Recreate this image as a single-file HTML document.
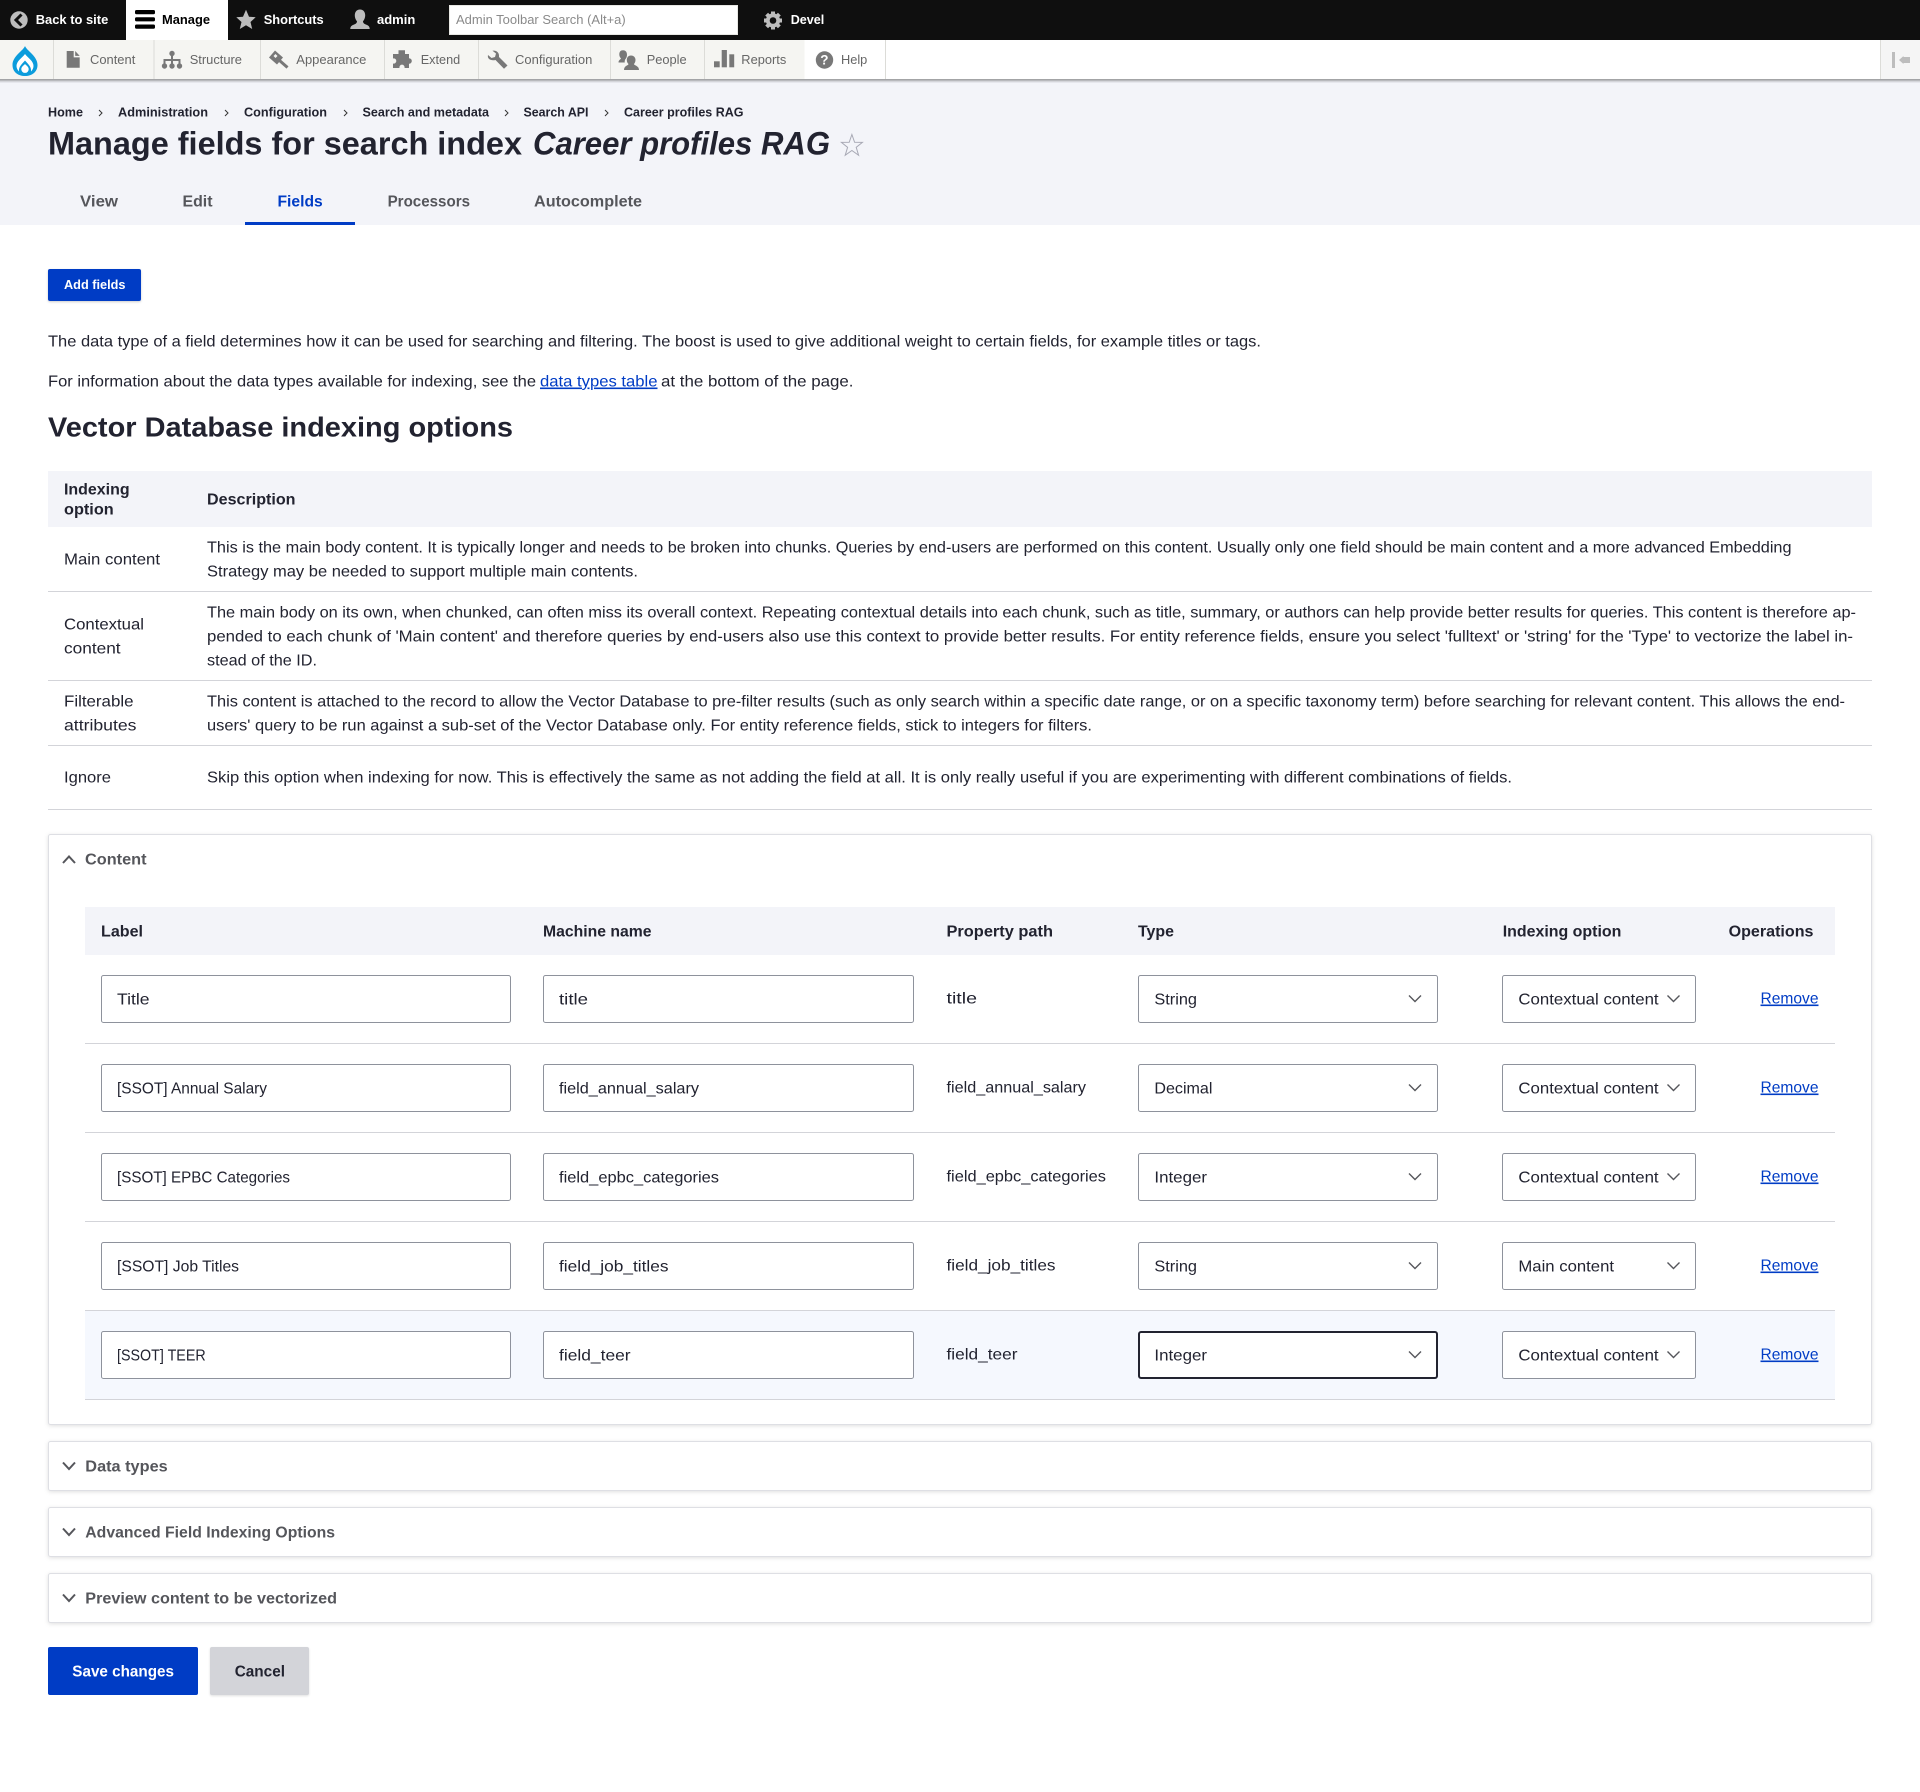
<!DOCTYPE html>
<html lang="en">
<head>
<meta charset="utf-8">
<title>Manage fields for search index Career profiles RAG</title>
<style>
html,body{margin:0;padding:0;background:#fff}
svg{display:block}
text{font-family:"Liberation Sans",Arial,sans-serif;font-size:16px;fill:#222330;white-space:pre;transform:translateY(-.5px)}
.tb{font-size:13px;font-weight:700;fill:#fff}
.mn{font-size:13px;fill:#666}
.bc{font-size:13px;font-weight:700;fill:#222330}
.b{font-weight:700}
.tab{font-weight:700;fill:#55565b}
.sm{font-weight:700;fill:#55565b}
.lk{fill:#003cc5;text-decoration:underline}
.inp{fill:#fff;stroke:#8e929c;stroke-width:1}
.ch{fill:none;stroke:#55565b;stroke-width:1.4}
.ch2{fill:none;stroke:#55565b;stroke-width:2}
.ln{fill:#d3d4d9}
.box{fill:#fff;stroke:#dedfe4;stroke-width:1;filter:drop-shadow(0 1px 2px rgba(0,0,0,.12))}
</style>
</head>
<body>
<svg xmlns="http://www.w3.org/2000/svg" width="1920" height="1792" viewBox="0 0 1920 1792">
<rect width="1920" height="1792" fill="#fff"/>

<!-- top bar -->
<rect width="1920" height="40" fill="#0f0f0f"/>
<rect x="126" width="102" height="40" fill="#fff"/>
<circle cx="19" cy="20" r="8.7" fill="#bdbdbd"/>
<path d="M21.5 14.5 L16 20 L21.5 25.5" fill="none" stroke="#0f0f0f" stroke-width="3"/>
<text class="tb" x="35.7" y="24.5" textLength="72.6" lengthAdjust="spacingAndGlyphs">Back to site</text>
<rect x="135" y="10" width="20" height="4.2" rx="1.5" fill="#000"/>
<rect x="135" y="17.2" width="20" height="4.2" rx="1.5" fill="#000"/>
<rect x="135" y="24.5" width="20" height="4.2" rx="1.5" fill="#000"/>
<text class="tb" style="fill:#000" x="162" y="24.5" textLength="48" lengthAdjust="spacingAndGlyphs">Manage</text>
<path d="M246 9.7 L249 16.8 L255.7 17.2 L250.5 22 L252.2 29 L246 25.3 L239.8 29 L241.5 22 L236.3 17.2 L243 16.8 Z" fill="#bdbdbd"/>
<text class="tb" x="263.7" y="24.5" textLength="60" lengthAdjust="spacingAndGlyphs">Shortcuts</text>
<path d="M360 9.5 C363.5 9.5 365.2 12.3 365.2 15.3 C365.2 18 364 20.3 363 21.3 C363 23.3 364.5 24 366.5 24.8 C368.5 25.6 369.7 26.7 369.7 29 L350.3 29 C350.3 26.7 351.5 25.6 353.5 24.8 C355.5 24 357 23.3 357 21.3 C356 20.3 354.8 18 354.8 15.3 C354.8 12.3 356.5 9.5 360 9.5Z" fill="#bdbdbd"/>
<text class="tb" x="377" y="24.5" textLength="38.3" lengthAdjust="spacingAndGlyphs">admin</text>
<rect x="449.5" y="5.5" width="288" height="29" fill="#fff" stroke="#e8e8e4" stroke-width="1"/>
<text class="mn" style="fill:#8a8a8a" x="456" y="24.5" textLength="169.7" lengthAdjust="spacingAndGlyphs">Admin Toolbar Search (Alt+a)</text>
<g fill="#bdbdbd">
<circle cx="773" cy="20.5" r="5.3" fill="none" stroke="#bdbdbd" stroke-width="3.6"/>
<rect x="771" y="11.5" width="4" height="18"/>
<rect x="771" y="11.5" width="4" height="18" transform="rotate(45 773 20.5)"/>
<rect x="771" y="11.5" width="4" height="18" transform="rotate(90 773 20.5)"/>
<rect x="771" y="11.5" width="4" height="18" transform="rotate(135 773 20.5)"/>
</g>
<circle cx="773" cy="20.5" r="3.3" fill="#0f0f0f"/>
<text class="tb" x="790.7" y="24.5" textLength="33.6" lengthAdjust="spacingAndGlyphs">Devel</text>

<!-- page header bg -->
<rect y="79" width="1920" height="146" fill="#f3f4f9"/>

<!-- second bar -->
<rect y="40" width="1920" height="39" fill="#fff"/>
<rect y="40" width="804.5" height="39" fill="#f5f5f2"/>
<rect x="1880" y="40" width="40" height="39" fill="#f5f5f5"/>
<g fill="#dcdcd8">
<rect x="53" y="40" width="1" height="39"/><rect x="153.5" y="40" width="1" height="39"/><rect x="260" y="40" width="1" height="39"/><rect x="384" y="40" width="1" height="39"/><rect x="478" y="40" width="1" height="39"/><rect x="610" y="40" width="1" height="39"/><rect x="704" y="40" width="1" height="39"/><rect x="885" y="40" width="1" height="39"/><rect x="1880" y="40" width="1" height="39"/>
</g>
<rect y="79" width="1920" height="1" fill="#a3a4a6"/>
<rect y="80" width="1920" height="1" fill="#b8b9bd"/>
<rect y="81" width="1920" height="1" fill="#d4d5da"/>
<rect y="82" width="1920" height="1" fill="#e6e7ed"/>

<!-- drupal logo -->
<path d="M25 46 C27 51 37.5 56 37.5 65 C37.5 72 32 76 25 76 C18 76 12.5 72 12.5 65 C12.5 56 23 51 25 46Z" fill="#0b9cdc"/>
<path d="M25 54 C28 58 33.5 61 33.5 66 C33.5 68 32.5 70 31 71.5 C31.5 66.5 28 64 25 60.5 C22 64 18.5 66.5 19 71.5 C17.5 70 16.5 68 16.5 66 C16.5 61 22 58 25 54Z" fill="#fff"/>
<path d="M25 64 C26 65.3 28.7 66.7 28.7 69.2 A3.7 3.7 0 0 1 21.3 69.2 C21.3 66.7 24 65.3 25 64Z" fill="#fff"/>

<!-- menu icons -->
<g fill="#787878">
<path d="M66.7 51 H73.7 V57.4 H79.7 V67.7 H66.7Z"/><path d="M75.2 51 L79.7 55.9 H75.2Z"/>
<circle cx="172" cy="53.5" r="2.7"/><circle cx="164.5" cy="66" r="2.7"/><circle cx="172" cy="66" r="2.7"/><circle cx="179.5" cy="66" r="2.7"/>
<path d="M171 53 h2 v6 h7.5 v7 h-2 v-5 h-5.5 v5 h-2 v-5 h-5.5 v5 h-2 v-7 h7.5z"/>
<path d="M269 57.5 L275 50.5 L283 57.5 L277 64.5Z M273.5 56 L275.5 58 L277.5 56 L275.5 54Z" fill-rule="evenodd"/>
<path d="M279.5 60.5 L287.5 67.5" stroke="#787878" stroke-width="3" fill="none"/>
<path d="M393 54 H398.5 V50.3 H405 V54 H409 V58.2 A2.8 2.8 0 1 1 409 63.8 V68 H404.5 A2.6 2.6 0 1 0 399.5 68 H393 V63.5 A2.6 2.6 0 1 0 393 58.5Z"/>
<path d="M488 55 L491.5 58 L495 57 L496 53.5 L492.5 50.7 C497 50 499.5 53 499 57 L507.5 65.5 L504 68.7 L495.5 60 C491 61 487 59 488 55Z"/>
<path d="M623 50.3 C626 50.3 627 52.5 627 55 C627 57 626 58.5 625.3 59.3 C624.8 60.5 624.5 61.5 624.8 62.5 L618.5 62.5 C618.5 60 620.5 59.5 621 58.5 C620 57.5 619.3 56 619.3 54.5 C619.3 52 620.5 50.3 623 50.3Z"/>
<path d="M631 55.5 C634 55.5 635.5 57.7 635.5 60 C635.5 62 634.5 63.2 634 64 C634 65.5 639 65.5 639 70 L624 70 C624 65.5 628.5 65.5 628.5 64 C627.7 63.2 626.8 62 626.8 60 C626.8 57.7 628 55.5 631 55.5Z"/>
<rect x="714" y="61.3" width="5.7" height="6"/><rect x="721.7" y="50" width="5.2" height="17.3"/><rect x="729.3" y="54.3" width="4.9" height="13"/>
<circle cx="824.5" cy="60" r="8.7"/>
</g>
<text x="820.3" y="65" style="font-size:13.5px;font-weight:700;fill:#fff">?</text>
<rect x="1892" y="52" width="3" height="16" fill="#bdbdbd"/>
<path d="M1899 60 L1903.5 56 V57 H1910 V63 H1903.5 V64Z" fill="#bdbdbd"/>

<text class="mn" x="90" y="64.5" textLength="45.3" lengthAdjust="spacingAndGlyphs">Content</text>
<text class="mn" x="189.7" y="64.5" textLength="52.3" lengthAdjust="spacingAndGlyphs">Structure</text>
<text class="mn" x="296.3" y="64.5" textLength="70" lengthAdjust="spacingAndGlyphs">Appearance</text>
<text class="mn" x="420.7" y="64.5" textLength="39.5" lengthAdjust="spacingAndGlyphs">Extend</text>
<text class="mn" x="515" y="64.5" textLength="77.3" lengthAdjust="spacingAndGlyphs">Configuration</text>
<text class="mn" x="646.7" y="64.5" textLength="40" lengthAdjust="spacingAndGlyphs">People</text>
<text class="mn" x="741.3" y="64.5" textLength="45" lengthAdjust="spacingAndGlyphs">Reports</text>
<text class="mn" x="841" y="64.5" textLength="26.3" lengthAdjust="spacingAndGlyphs">Help</text>

<!-- breadcrumb -->
<text class="bc" x="48" y="117" textLength="35" lengthAdjust="spacingAndGlyphs">Home</text>
<text class="bc" x="118" y="117" textLength="90" lengthAdjust="spacingAndGlyphs">Administration</text>
<text class="bc" x="244" y="117" textLength="83" lengthAdjust="spacingAndGlyphs">Configuration</text>
<text class="bc" x="362.5" y="117" textLength="126.5" lengthAdjust="spacingAndGlyphs">Search and metadata</text>
<text class="bc" x="523.5" y="117" textLength="65" lengthAdjust="spacingAndGlyphs">Search API</text>
<text class="bc" x="624" y="117" textLength="119.5" lengthAdjust="spacingAndGlyphs">Career profiles RAG</text>
<g fill="none" stroke="#333" stroke-width="1">
<path d="M99 110 L102 113 L99 116"/><path d="M225 110 L228 113 L225 116"/><path d="M344 110 L347 113 L344 116"/><path d="M505 110 L508 113 L505 116"/><path d="M605 110 L608 113 L605 116"/>
</g>

<!-- title -->
<text x="48" y="155" class="b" style="font-size:32px" textLength="474" lengthAdjust="spacingAndGlyphs">Manage fields for search index</text>
<text x="533" y="155" class="b" style="font-size:32px;font-style:italic" textLength="297" lengthAdjust="spacingAndGlyphs">Career profiles RAG</text>
<path d="M851.9 134.5 L854.6 142.3 L862.4 142.4 L856.2 147.3 L858.6 155.3 L851.9 150.5 L845.2 155.3 L847.6 147.3 L841.4 142.4 L849.2 142.3 Z" fill="none" stroke="#a8a9b5" stroke-width="1"/>

<!-- tabs -->
<text class="tab" x="80" y="207" textLength="38" lengthAdjust="spacingAndGlyphs">View</text>
<text class="tab" x="182.5" y="207" textLength="30" lengthAdjust="spacingAndGlyphs">Edit</text>
<text class="tab" style="fill:#003cc5" x="277.5" y="207" textLength="45.2" lengthAdjust="spacingAndGlyphs">Fields</text>
<text class="tab" x="387.6" y="207" textLength="82.4" lengthAdjust="spacingAndGlyphs">Processors</text>
<text class="tab" x="534" y="207" textLength="108" lengthAdjust="spacingAndGlyphs">Autocomplete</text>
<rect x="245" y="222" width="110" height="3" fill="#003cc5"/>

<!-- add fields -->
<rect x="48" y="269" width="93" height="32" rx="2" fill="#003cc5" style="filter:drop-shadow(0 1px 1px rgba(0,0,0,.2))"/>
<text class="b" style="font-size:13px;fill:#fff" x="64" y="289.5" textLength="61.5" lengthAdjust="spacingAndGlyphs">Add fields</text>

<!-- intro -->
<text x="48" y="347" textLength="1213" lengthAdjust="spacingAndGlyphs">The data type of a field determines how it can be used for searching and filtering. The boost is used to give additional weight to certain fields, for example titles or tags.</text>
<text x="48" y="387" textLength="488" lengthAdjust="spacingAndGlyphs">For information about the data types available for indexing, see the</text>
<text class="lk" x="540" y="387" textLength="117.5" lengthAdjust="spacingAndGlyphs">data types table</text>
<text x="661" y="387" textLength="192.5" lengthAdjust="spacingAndGlyphs">at the bottom of the page.</text>

<text class="b" style="font-size:28px" x="48" y="437" textLength="465" lengthAdjust="spacingAndGlyphs">Vector Database indexing options</text>

<!-- indexing table -->
<rect x="48" y="471" width="1824" height="56" fill="#f3f4f9"/>
<text class="b" x="64" y="495" textLength="65.6" lengthAdjust="spacingAndGlyphs">Indexing</text>
<text class="b" x="64" y="515" textLength="49.7" lengthAdjust="spacingAndGlyphs">option</text>
<text class="b" x="207" y="505" textLength="88.5" lengthAdjust="spacingAndGlyphs">Description</text>

<text x="64" y="565" textLength="96" lengthAdjust="spacingAndGlyphs">Main content</text>
<text x="207" y="553" textLength="1584.5" lengthAdjust="spacingAndGlyphs">This is the main body content. It is typically longer and needs to be broken into chunks. Queries by end-users are performed on this content. Usually only one field should be main content and a more advanced Embedding</text>
<text x="207" y="577" textLength="431" lengthAdjust="spacingAndGlyphs">Strategy may be needed to support multiple main contents.</text>
<rect class="ln" x="48" y="591" width="1824" height="1"/>

<text x="64" y="630" textLength="80" lengthAdjust="spacingAndGlyphs">Contextual</text>
<text x="64" y="654" textLength="56.6" lengthAdjust="spacingAndGlyphs">content</text>
<text x="207" y="618" textLength="1649" lengthAdjust="spacingAndGlyphs">The main body on its own, when chunked, can often miss its overall context. Repeating contextual details into each chunk, such as title, summary, or authors can help provide better results for queries. This content is therefore ap-</text>
<text x="207" y="642" textLength="1646" lengthAdjust="spacingAndGlyphs">pended to each chunk of 'Main content' and therefore queries by end-users also use this context to provide better results. For entity reference fields, ensure you select 'fulltext' or 'string' for the 'Type' to vectorize the label in-</text>
<text x="207" y="666" textLength="110" lengthAdjust="spacingAndGlyphs">stead of the ID.</text>
<rect class="ln" x="48" y="680" width="1824" height="1"/>

<text x="64" y="707" textLength="69.5" lengthAdjust="spacingAndGlyphs">Filterable</text>
<text x="64" y="731" textLength="72.5" lengthAdjust="spacingAndGlyphs">attributes</text>
<text x="207" y="707" textLength="1638" lengthAdjust="spacingAndGlyphs">This content is attached to the record to allow the Vector Database to pre-filter results (such as only search within a specific date range, or on a specific taxonomy term) before searching for relevant content. This allows the end-</text>
<text x="207" y="731" textLength="885" lengthAdjust="spacingAndGlyphs">users' query to be run against a sub-set of the Vector Database only. For entity reference fields, stick to integers for filters.</text>
<rect class="ln" x="48" y="745" width="1824" height="1"/>

<text x="64" y="783" textLength="47" lengthAdjust="spacingAndGlyphs">Ignore</text>
<text x="207" y="783" textLength="1305" lengthAdjust="spacingAndGlyphs">Skip this option when indexing for now. This is effectively the same as not adding the field at all. It is only really useful if you are experimenting with different combinations of fields.</text>
<rect class="ln" x="48" y="809" width="1824" height="1"/>

<!-- content details -->
<rect class="box" x="48.5" y="834.5" width="1823" height="590" rx="2"/>
<path class="ch2" d="M63 863 L69 856.5 L75 863"/>
<text class="sm" x="85" y="865" textLength="61.5" lengthAdjust="spacingAndGlyphs">Content</text>

<rect x="85" y="907" width="1750" height="48" fill="#f3f4f9"/>
<text class="b" x="101" y="937" textLength="42" lengthAdjust="spacingAndGlyphs">Label</text>
<text class="b" x="543" y="937" textLength="108.5" lengthAdjust="spacingAndGlyphs">Machine name</text>
<text class="b" x="946.5" y="937" textLength="106.5" lengthAdjust="spacingAndGlyphs">Property path</text>
<text class="b" x="1138" y="937" textLength="36" lengthAdjust="spacingAndGlyphs">Type</text>
<text class="b" x="1502.7" y="937" textLength="118.7" lengthAdjust="spacingAndGlyphs">Indexing option</text>
<text class="b" x="1728.6" y="937" textLength="84.9" lengthAdjust="spacingAndGlyphs">Operations</text>

<rect x="85" y="1311" width="1750" height="88" fill="#f5f8fe"/>
<rect class="ln" x="85" y="1043" width="1750" height="1"/>
<rect class="ln" x="85" y="1132" width="1750" height="1"/>
<rect class="ln" x="85" y="1221" width="1750" height="1"/>
<rect class="ln" x="85" y="1310" width="1750" height="1"/>
<rect class="ln" x="85" y="1399" width="1750" height="1"/>

<!-- row 1 -->
<rect class="inp" x="101.5" y="975.5" width="409" height="47" rx="2"/>
<rect class="inp" x="543.5" y="975.5" width="370" height="47" rx="2"/>
<rect class="inp" x="1138.5" y="975.5" width="299" height="47" rx="2"/>
<rect class="inp" x="1502.5" y="975.5" width="193" height="47" rx="2"/>
<text x="117" y="1005" textLength="32.5" lengthAdjust="spacingAndGlyphs">Title</text>
<text x="559" y="1005" textLength="29" lengthAdjust="spacingAndGlyphs">title</text>
<text x="946.5" y="1004" textLength="30.5" lengthAdjust="spacingAndGlyphs">title</text>
<text x="1154.4" y="1005" textLength="42.6" lengthAdjust="spacingAndGlyphs">String</text>
<path class="ch" d="M1409 995.5 L1415 1001.5 L1421 995.5"/>
<text x="1518.4" y="1005" textLength="140.2" lengthAdjust="spacingAndGlyphs">Contextual content</text>
<path class="ch" d="M1667.5 995.5 L1673.5 1001.5 L1679.5 995.5"/>
<text class="lk" x="1760.5" y="1004" textLength="58" lengthAdjust="spacingAndGlyphs">Remove</text>

<!-- row 2 -->
<rect class="inp" x="101.5" y="1064.5" width="409" height="47" rx="2"/>
<rect class="inp" x="543.5" y="1064.5" width="370" height="47" rx="2"/>
<rect class="inp" x="1138.5" y="1064.5" width="299" height="47" rx="2"/>
<rect class="inp" x="1502.5" y="1064.5" width="193" height="47" rx="2"/>
<text x="117" y="1094" textLength="150" lengthAdjust="spacingAndGlyphs">[SSOT] Annual Salary</text>
<text x="559" y="1094" textLength="140" lengthAdjust="spacingAndGlyphs">field_annual_salary</text>
<text x="946.5" y="1093" textLength="139.5" lengthAdjust="spacingAndGlyphs">field_annual_salary</text>
<text x="1154.4" y="1094" textLength="58" lengthAdjust="spacingAndGlyphs">Decimal</text>
<path class="ch" d="M1409 1084.5 L1415 1090.5 L1421 1084.5"/>
<text x="1518.4" y="1094" textLength="140.2" lengthAdjust="spacingAndGlyphs">Contextual content</text>
<path class="ch" d="M1667.5 1084.5 L1673.5 1090.5 L1679.5 1084.5"/>
<text class="lk" x="1760.5" y="1093" textLength="58" lengthAdjust="spacingAndGlyphs">Remove</text>

<!-- row 3 -->
<rect class="inp" x="101.5" y="1153.5" width="409" height="47" rx="2"/>
<rect class="inp" x="543.5" y="1153.5" width="370" height="47" rx="2"/>
<rect class="inp" x="1138.5" y="1153.5" width="299" height="47" rx="2"/>
<rect class="inp" x="1502.5" y="1153.5" width="193" height="47" rx="2"/>
<text x="117" y="1183" textLength="173" lengthAdjust="spacingAndGlyphs">[SSOT] EPBC Categories</text>
<text x="559" y="1183" textLength="160" lengthAdjust="spacingAndGlyphs">field_epbc_categories</text>
<text x="946.5" y="1182" textLength="159.5" lengthAdjust="spacingAndGlyphs">field_epbc_categories</text>
<text x="1154.4" y="1183" textLength="52.6" lengthAdjust="spacingAndGlyphs">Integer</text>
<path class="ch" d="M1409 1173.5 L1415 1179.5 L1421 1173.5"/>
<text x="1518.4" y="1183" textLength="140.2" lengthAdjust="spacingAndGlyphs">Contextual content</text>
<path class="ch" d="M1667.5 1173.5 L1673.5 1179.5 L1679.5 1173.5"/>
<text class="lk" x="1760.5" y="1182" textLength="58" lengthAdjust="spacingAndGlyphs">Remove</text>

<!-- row 4 -->
<rect class="inp" x="101.5" y="1242.5" width="409" height="47" rx="2"/>
<rect class="inp" x="543.5" y="1242.5" width="370" height="47" rx="2"/>
<rect class="inp" x="1138.5" y="1242.5" width="299" height="47" rx="2"/>
<rect class="inp" x="1502.5" y="1242.5" width="193" height="47" rx="2"/>
<text x="117" y="1272" textLength="122" lengthAdjust="spacingAndGlyphs">[SSOT] Job Titles</text>
<text x="559" y="1272" textLength="109.5" lengthAdjust="spacingAndGlyphs">field_job_titles</text>
<text x="946.5" y="1271" textLength="109" lengthAdjust="spacingAndGlyphs">field_job_titles</text>
<text x="1154.4" y="1272" textLength="42.6" lengthAdjust="spacingAndGlyphs">String</text>
<path class="ch" d="M1409 1262.5 L1415 1268.5 L1421 1262.5"/>
<text x="1518.4" y="1272" textLength="95.6" lengthAdjust="spacingAndGlyphs">Main content</text>
<path class="ch" d="M1667.5 1262.5 L1673.5 1268.5 L1679.5 1262.5"/>
<text class="lk" x="1760.5" y="1271" textLength="58" lengthAdjust="spacingAndGlyphs">Remove</text>

<!-- row 5 -->
<rect class="inp" x="101.5" y="1331.5" width="409" height="47" rx="2"/>
<rect class="inp" x="543.5" y="1331.5" width="370" height="47" rx="2"/>
<rect x="1139" y="1332" width="298" height="46" rx="2" fill="#fff" stroke="#222330" stroke-width="2"/>
<rect class="inp" x="1502.5" y="1331.5" width="193" height="47" rx="2"/>
<text x="117" y="1361" textLength="88.7" lengthAdjust="spacingAndGlyphs">[SSOT] TEER</text>
<text x="559" y="1361" textLength="71.6" lengthAdjust="spacingAndGlyphs">field_teer</text>
<text x="946.5" y="1360" textLength="71" lengthAdjust="spacingAndGlyphs">field_teer</text>
<text x="1154.4" y="1361" textLength="52.6" lengthAdjust="spacingAndGlyphs">Integer</text>
<path class="ch" d="M1409 1351.5 L1415 1357.5 L1421 1351.5"/>
<text x="1518.4" y="1361" textLength="140.2" lengthAdjust="spacingAndGlyphs">Contextual content</text>
<path class="ch" d="M1667.5 1351.5 L1673.5 1357.5 L1679.5 1351.5"/>
<text class="lk" x="1760.5" y="1360" textLength="58" lengthAdjust="spacingAndGlyphs">Remove</text>

<!-- collapsed details -->
<rect class="box" x="48.5" y="1441.5" width="1823" height="49" rx="2"/>
<path class="ch2" d="M63 1462.5 L69 1469 L75 1462.5"/>
<text class="sm" x="85.3" y="1472" textLength="82.4" lengthAdjust="spacingAndGlyphs">Data types</text>
<rect class="box" x="48.5" y="1507.5" width="1823" height="49" rx="2"/>
<path class="ch2" d="M63 1528.5 L69 1535 L75 1528.5"/>
<text class="sm" x="85.3" y="1538" textLength="249.7" lengthAdjust="spacingAndGlyphs">Advanced Field Indexing Options</text>
<rect class="box" x="48.5" y="1573.5" width="1823" height="49" rx="2"/>
<path class="ch2" d="M63 1594.5 L69 1601 L75 1594.5"/>
<text class="sm" x="85.3" y="1604" textLength="251.7" lengthAdjust="spacingAndGlyphs">Preview content to be vectorized</text>

<!-- actions -->
<rect x="48" y="1647" width="150" height="48" rx="2" fill="#003cc5"/>
<text class="b" style="fill:#fff" x="72.3" y="1677" textLength="101.7" lengthAdjust="spacingAndGlyphs">Save changes</text>
<rect x="210" y="1647" width="99" height="48" rx="2" fill="#d3d4d9" style="filter:drop-shadow(0 1px 1px rgba(0,0,0,.12))"/>
<text class="b" x="234.7" y="1677" textLength="50.3" lengthAdjust="spacingAndGlyphs">Cancel</text>
</svg>
</body>
</html>
